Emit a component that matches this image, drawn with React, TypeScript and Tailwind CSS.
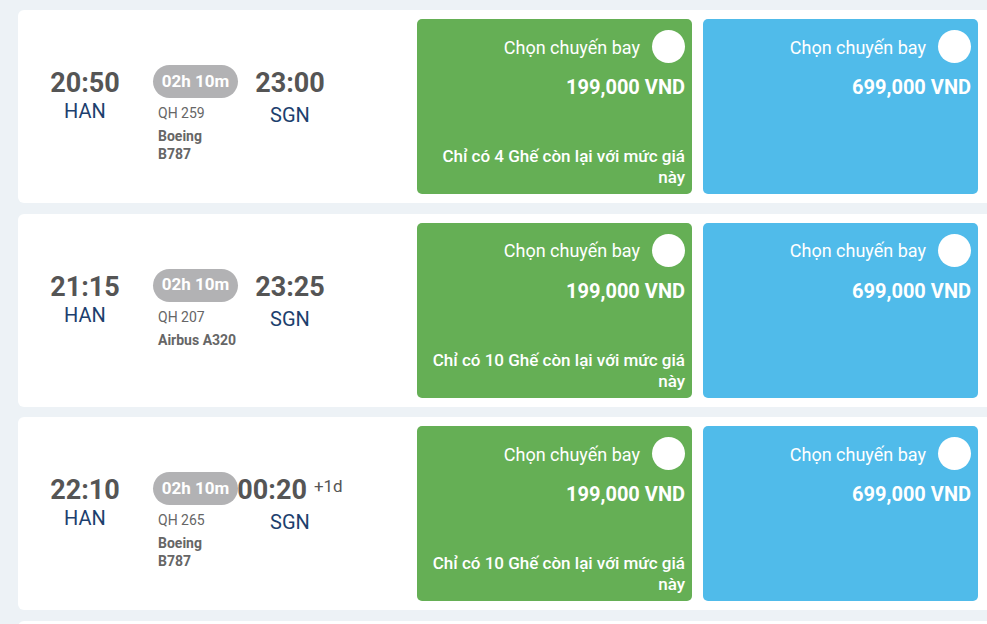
const flights = [
  { dep: "20:50", arr: "23:00", code: "QH 259", plane: ["Boeing", "B787"], seats: 4, nextDay: false },
  { dep: "21:15", arr: "23:25", code: "QH 207", plane: ["Airbus A320"], seats: 10, nextDay: false },
  { dep: "22:10", arr: "00:20", code: "QH 265", plane: ["Boeing", "B787"], seats: 10, nextDay: true },
];

type Flight = (typeof flights)[number];

function FareBox({ color, price, seats }: { color: "green" | "blue"; price: string; seats?: number }) {
  return (
    <div
      className={`flex w-[275px] flex-col items-end rounded-[5px] pt-[11px] pb-[6px] pl-[8px] pr-[7px] text-right text-white ${
        color === "green" ? "bg-[#65af55]" : "bg-[#50bbea]"
      }`}
    >
      <div className="flex items-center gap-[12px]">
        <span className="pt-[2px] text-[18px] leading-[22px]">Chọn chuyến bay</span>
        <span className="h-[33px] w-[33px] rounded-full bg-white" />
      </div>
      <div className="mt-[12px] text-[20px] font-bold leading-[24px]">{price}</div>
      {seats !== undefined && (
        <div className="mt-auto text-[17px] font-medium leading-[21px]">
          Chỉ có {seats} Ghế còn lại với mức giá này
        </div>
      )}
    </div>
  );
}

function FlightCard({ f }: { f: Flight }) {
  return (
    <div className="flex h-[193px] shrink-0 rounded-l-md bg-white">
      {/* thông tin chuyến bay */}
      <div className="flex w-[399px] items-start pt-[55px]">
        <div className="ml-[17px] flex w-[100px] flex-col items-center pt-[3px]">
          <div className="text-[27px] font-bold leading-[31px] text-[#555]">{f.dep}</div>
          <div className="text-[20px] leading-[24px] text-[#1d3f6e]">HAN</div>
        </div>
        <div className="ml-[18px] flex w-[85px] flex-col">
          <div className="flex h-[33px] items-center justify-center rounded-full bg-[#b2b2b4] text-[17px] font-bold text-white">
            02h 10m
          </div>
          <div className="mt-[6px] pl-[5px] text-[14px] leading-[18px] text-[#666]">{f.code}</div>
          <div className="mt-[5px] pl-[5px] text-[14px] font-bold leading-[18px] text-[#666]">
            {f.plane.map((p) => (
              <div key={p}>{p}</div>
            ))}
          </div>
        </div>
        <div className="flex w-[104px] flex-col items-center pt-[3px]">
          <div className="flex items-start text-[#555]">
            <span className="text-[27px] font-bold leading-[31px]">{f.arr}</span>
            {f.nextDay && <span className="ml-[7px] text-[17px] leading-[22px]">+1d</span>}
          </div>
          <div className="mt-[4px] text-[20px] leading-[24px] text-[#1d3f6e]">SGN</div>
        </div>
      </div>

      {/* giá vé */}
      <div className="flex gap-[11px] py-[9px]">
        <FareBox color="green" price="199,000 VND" seats={f.seats} />
        <FareBox color="blue" price="699,000 VND" />
      </div>
    </div>
  );
}

export default function App() {
  return (
    <div
      className="flex h-[624px] flex-col gap-[10.5px] overflow-hidden bg-[#edf2f6] pl-[18px] pt-[10px]"
      style={{ fontFamily: "Roboto, 'Noto Sans', sans-serif" }}
    >
      {flights.map((f) => (
        <FlightCard key={f.code} f={f} />
      ))}
      {/* chuyến kế tiếp, chỉ thấy mép trên */}
      <div className="h-[193px] shrink-0 rounded-l-md bg-white" />
    </div>
  );
}
